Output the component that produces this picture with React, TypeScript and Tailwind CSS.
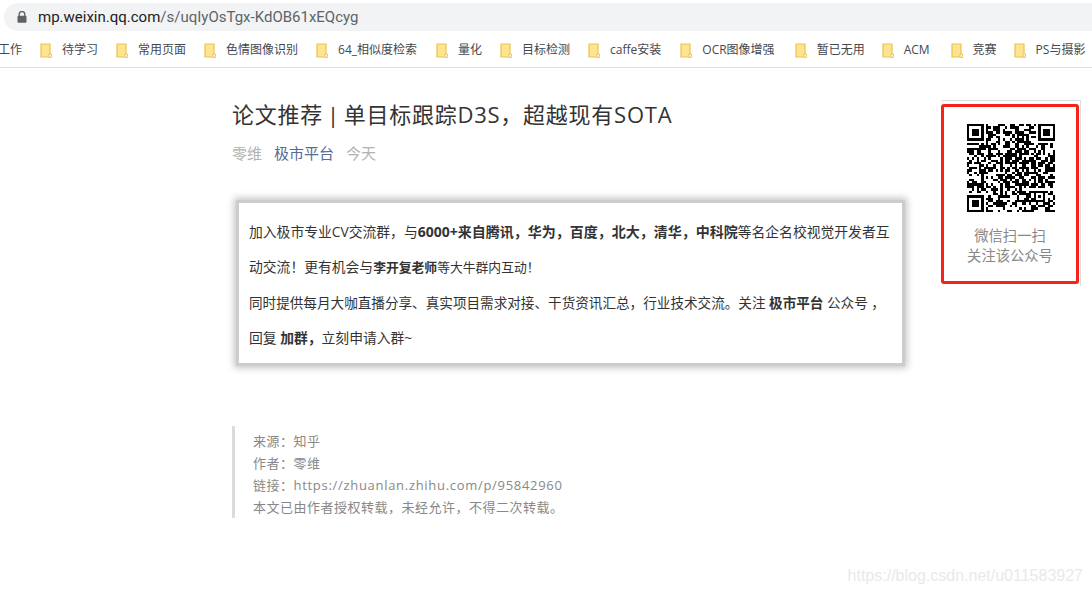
// App.tsx
const bookmarks = [
  { label: "待学习", gap: "ml-[18px]" },
  { label: "常用页面", gap: "ml-[18px]" },
  { label: "色情图像识别", gap: "ml-[18px]" },
  { label: "64_相似度检索", gap: "ml-[18px]" },
  { label: "量化", gap: "ml-[19px]" },
  { label: "目标检测", gap: "ml-[18px]" },
  { label: "caffe安装", gap: "ml-[18px]" },
  { label: "OCR图像增强", gap: "ml-[19px]" },
  { label: "暂已无用", gap: "ml-[20px]" },
  { label: "ACM", gap: "ml-[17px]" },
  { label: "竞赛", gap: "ml-[21px]" },
  { label: "PS与摄影", gap: "ml-[17px]" },
];

function FolderIcon() {
  return (
    <svg width="12" height="15" viewBox="0 0 12 15" className="shrink-0">
      <path d="M1 1h9v13H1z" fill="#fee491" stroke="#e9c44e" strokeWidth="1.2" />
      <path d="M9 11h2.4v3.4H9z" fill="#fff" stroke="#e9c44e" strokeWidth="1" />
    </svg>
  );
}

function LockIcon() {
  return (
    <svg width="10" height="12" viewBox="0 0 10 12" className="shrink-0">
      <path d="M2.2 5V3.4a2.8 2.8 0 0 1 5.6 0V5" fill="none" stroke="#5f6368" strokeWidth="1.3" />
      <rect x="0.5" y="4.8" width="9" height="7" rx="1" fill="#5f6368" />
    </svg>
  );
}

// finder squares are real, the data modules are only a stand-in
function QrCode() {
  const size = 37;
  const cells: [number, number][] = [];
  let seed = 20200817;
  for (let y = 0; y < size; y++) {
    for (let x = 0; x < size; x++) {
      seed = (seed * 1103515245 + 12345) & 0x7fffffff;
      const inFinder = (x < 8 && y < 8) || (x > 28 && y < 8) || (x < 8 && y > 28);
      const inAlign = x >= 28 && x <= 32 && y >= 28 && y <= 32;
      if (!inFinder && !inAlign && (seed >> 16) % 100 < 55) cells.push([x, y]);
    }
  }
  const finder = (x: number, y: number) => (
    <g key={`${x}-${y}`}>
      <rect x={x} y={y} width="7" height="7" fill="#000" />
      <rect x={x + 1} y={y + 1} width="5" height="5" fill="#fff" />
      <rect x={x + 2} y={y + 2} width="3" height="3" fill="#000" />
    </g>
  );
  return (
    <svg width="88" height="88" viewBox="0 0 37 37" shapeRendering="crispEdges" className="ml-[2px]">
      {cells.map(([x, y]) => (
        <rect key={`${x}:${y}`} x={x} y={y} width="1" height="1" fill="#000" />
      ))}
      {finder(0, 0)}
      {finder(30, 0)}
      {finder(0, 30)}
      <rect x="28" y="28" width="5" height="5" fill="#000" />
      <rect x="29" y="29" width="3" height="3" fill="#fff" />
      <rect x="30" y="30" width="1" height="1" fill="#000" />
    </svg>
  );
}

export default function App() {
  return (
    <div
      className="relative h-[596px] w-[1092px] overflow-hidden bg-white"
      style={{ fontFamily: '"Open Sans", "Noto Sans CJK SC", sans-serif' }}
    >
      {/* browser chrome */}
      <div className="h-[68px] border-b border-[#e0e0e0]">
        <div className="pl-1 pt-[3px]">
          <div className="flex h-[28px] items-center rounded-l-[14px] bg-[#f1f3f4] pl-[13px]">
            <LockIcon />
            <span
              className="ml-[11px] text-[15px] text-[#5f6368]"
              style={{ fontFamily: 'Roboto, "Noto Sans", sans-serif' }}
            >
              <span className="text-[#202124]">mp.weixin.qq.com</span>/s/uqIyOsTgx-KdOB61xEQcyg
            </span>
          </div>
        </div>
        <div className="-ml-[2px] mt-[10px] flex h-[18px] items-center whitespace-nowrap text-[12px] text-[#45484c]">
          <span>工作</span>
          {bookmarks.map((b) => (
            <div key={b.label} className={`flex items-center gap-[10px] ${b.gap}`}>
              <FolderIcon />
              <span>{b.label}</span>
            </div>
          ))}
        </div>
      </div>

      {/* article + qr card */}
      <div className="flex pl-[232px]">
        <div className="w-[673px] shrink-0">
          <h1 className="mt-[31px] text-[22px] font-normal leading-[30px] tracking-[0.75px] [word-spacing:-2.5px] text-[#333333]">
            论文推荐 | 单目标跟踪D3S，超越现有SOTA
          </h1>
          <div className="mt-[14px] flex text-[15px] leading-[20px] text-[#b2b2b2]">
            <span>零维</span>
            <span className="ml-3 text-[#576b95]">极市平台</span>
            <span className="ml-3">今天</span>
          </div>

          <div className="ml-1 mt-[37px] h-[166px] border-[3px] border-[#cccccc] bg-white pl-[10px] pt-[11px] text-[13.8px] leading-[35px] whitespace-nowrap text-[#333333] shadow-[0_0_7px_2px_#c4c4c4]">
            <div>
              加入极市专业CV交流群，与<b className="text-[14px]">6000+来自腾讯，华为，百度，北大，清华，中科院</b>等名企名校视觉开发者互
            </div>
            <div>
              动交流！更有机会与<b className="text-[12.8px]">李开复老师</b>
              <span className="text-[12.8px]">等大牛群内互动！</span>
            </div>
            <div className="text-[13.6px]">
              同时提供每月大咖直播分享、真实项目需求对接、干货资讯汇总，行业技术交流。关注 <b>极市平台</b> 公众号 ，
            </div>
            <div>
              回复 <b>加群，</b>立刻申请入群~
            </div>
          </div>

          <div className="mt-[60px] border-l-[3px] border-[#dbdbdb] pl-[18px] pt-1 text-[13px] leading-[22px] tracking-[0.5px] text-[#888888]">
            <div>来源：知乎</div>
            <div>作者：零维</div>
            <div>
              链接：<span className="tracking-[0.7px]">https://zhuanlan.zhihu.com/p/95842960</span>
            </div>
            <div>本文已由作者授权转载，未经允许，不得二次转载。</div>
          </div>
        </div>

        <div className="ml-9 mt-8 h-[186px] w-[140px] shrink-0 border-r border-t border-[#dddddd] pt-[3px]">
          <div className="flex h-[180px] w-[138px] flex-col items-center rounded-[3px] border-[3px] border-[#f5231a] pt-[17px]">
            <QrCode />
            <div className="mt-[14px] text-center text-[14.3px] leading-[20px] text-[#888888]">
              <div>微信扫一扫</div>
              <div>关注该公众号</div>
            </div>
          </div>
        </div>
      </div>

      {/* csdn watermark */}
      <div
        className="absolute bottom-[8px] right-[9px] text-[16px] text-[#e9e9e9]"
        style={{ fontFamily: '"Liberation Sans", sans-serif' }}
      >
        https://blog.csdn.net/u011583927
      </div>
    </div>
  );
}
